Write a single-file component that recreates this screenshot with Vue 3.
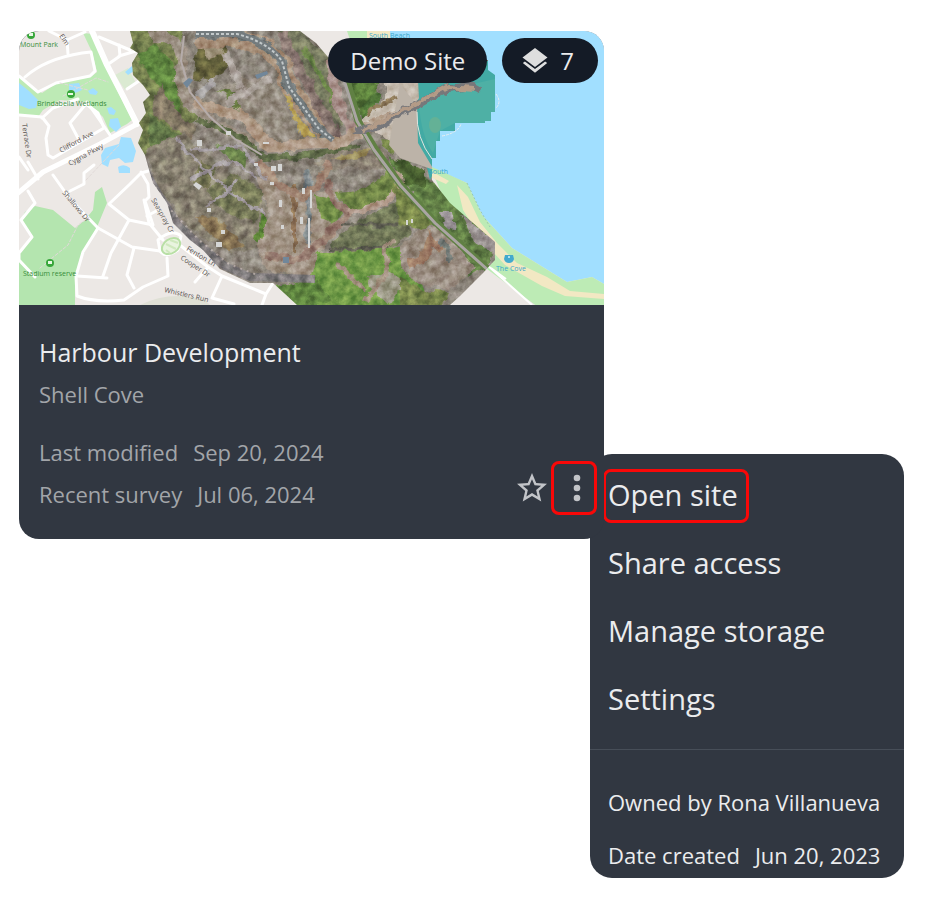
<template>
  <main class="page">
    <article class="site-card">
      <div class="map-box">
        <svg class="map" viewBox="19 31 585 274" preserveAspectRatio="xMidYMid slice" role="img" aria-label="Site map">
          <defs>
            <clipPath id="survey-area">
              <path
                d="M130 31L133 43L130 48L138 53L132 63L133 75L143 85L150 95L143 102L146 113L139 123L143 130L138 143L145 155L149 170L153 183L167 203L173 223L190 240L203 250L220 269L250 283L273 283L284 293L297 305H450L460 296L483 273L495 260V242L450 203L432 180V158H436V141H440V131H455V123H485V121H491V112H495V75L488 70V60H345L328 57L316 43L300 31Z"
              />
            </clipPath>
            <filter id="rough" x="-5%" y="-5%" width="110%" height="110%">
              <feTurbulence type="fractalNoise" baseFrequency="0.09" numOctaves="3" seed="4" result="n" />
              <feDisplacementMap in="SourceGraphic" in2="n" scale="9" xChannelSelector="R" yChannelSelector="G" />
            </filter>
            <filter id="grain" x="0" y="0" width="100%" height="100%" color-interpolation-filters="sRGB">
              <feTurbulence type="fractalNoise" baseFrequency="0.12" numOctaves="5" seed="9" />
              <feColorMatrix values="1.6 .5 0 0 -.55  1.5 .6 0 0 -.55  1.5 .5 .1 0 -.55  0 0 0 0 1" />
            </filter>
          </defs>

          <rect x="19" y="31" width="585" height="274" fill="#ece8e5" />

          <!-- parks -->
          <g fill="#bdeab5">
            <path
              d="M83 33L93 34L107 70L132 120L127 124L110 133L103 117L87 102L60 100L43 110L38 117L19 115V77L42 93L57 83L92 76L97 72L92 52Z"
            />
            <path d="M347 31H370V40H350Z" />
            <path d="M115 75L128 68L136 83L125 90Z" fill="#dbead2" />
          </g>
          <path
            d="M19 253L32 237L21 220L25 212L35 206L53 210L75 228L85 220L93 210L95 192L102 187L107 203L97 227L82 257L75 277V305H19Z"
            fill="#b4e5af"
          />
          <path d="M140 305Q170 290 205 300L210 305Z" fill="#dfe0d5" />

          <!-- water -->
          <g fill="#a1dfff">
            <path d="M388 31H604V284L592 277L567 282L512 248L482 215L467 183L432 168L420 120Z" />
            <path d="M19 83L29 91L38 100L36 108L29 109L19 105Z" />
            <path d="M69 84L79 83L82 90L73 94L69 91Z" />
            <path d="M88 91L93 88L98 92L96 95L90 94Z" />
            <path d="M107 108L111 107L116 111L114 115L109 114Z" />
            <path d="M110 119L118 118L121 127L116 132L109 126Z" />
            <path d="M125 72L132 66L134 71L128 75Z" />
            <path d="M101 155L105 148L119 144L121 137L131 138L136 151L133 162L125 163L119 158L110 160L108 167L102 164Z" />
            <path d="M118 167Q124 163 130 168V173H119Z" />
          </g>

          <!-- coast -->
          <path
            d="M430 166L467 183L482 215L512 248L567 282L592 277L604 284V305H535L483 266L440 190Z"
            fill="#bdebb5"
          />
          <path
            d="M457 185L468 197L480 222L497 243L517 263L547 277L570 291L604 294V299L565 296L542 286L505 265L482 240L463 210Z"
            fill="#f2e8c3"
          />
          <path d="M429 170L449 181L446 184L428 176Z" fill="#f2e8c3" />
          <path d="M367 31H390V40H367Z" fill="#f2e8c3" />
          <path d="M483 268L535 305H450Z" fill="#ece8e5" />
          <path d="M487 265L532 305M491 268L506 279" fill="none" stroke="#fff" stroke-width="2" />
          <path d="M467 183L480 210L490 227" fill="none" stroke="#98c9b0" stroke-width="1" stroke-dasharray="2 2" />
          <path d="M496 94Q502 102 496 108M442 136Q458 133 461 124" fill="none" stroke="#e8eef0" stroke-dasharray="3 1" />

          <!-- roads -->
          <g fill="none" stroke="#fff" stroke-linejoin="round" stroke-linecap="round">
            <path d="M92 31L107 65L124 98L137 124" stroke-width="6" />
            <path d="M137 124L100 144L43 172L17 194" stroke-width="5" />
            <g stroke-width="3">
              <path d="M19 76L38 92L56 83L90 76L95 71L91 52L82 53Q45 59 25 77M85 32L67 40L49 31M67 40L68 54" />
              <path d="M99 37L130 50M119 45L120 56L107 65M136 51L119 56M127 89L145 77" />
              <path d="M19 115L42 117L49 126L46 138L48 155L53 158L104 128L98 113L86 104L70 123L78 138" />
              <path d="M42 118L53 108L78 99M87 102L110 135" />
              <path d="M19 157L28 170M28 162L38 179M53 175L70 199L98 228L132 247L160 251" />
              <path d="M28 191L35 203L21 220L32 237L19 253L19 260L35 277" />
              <path d="M94 165L84 173V184L70 191" />
              <path d="M152 170L141 173L130 184L109 204L129 220L153 225L145 201L149 197L148 184L141 172" />
              <path d="M98 228L83 252L76 276L77 296Q95 303 124 300L143 287L168 276L167 258" />
              <path d="M129 220L111 253L103 276M77 276L107 278M134 248L127 275L134 288" />
              <path d="M144 200L149 223L163 240M147 216L158 210M158 240Q172 228 181 236L178 250Q165 259 160 251Z" />
              <path d="M181 246L208 267L195 282M208 267L222 276L212 298L234 304M222 276L266 294L273 283M266 294L262 305" />
            </g>
            <path d="M60 83L88 90M63 96L96 78L108 82M40 268L68 245L78 225L91 216M86 180L119 145" stroke="#e0d9d8" stroke-width="1" stroke-dasharray="3 2" />
          </g>
          <ellipse cx="171" cy="246" rx="10" ry="7" transform="rotate(-35 171 246)" fill="#e9f4df" stroke="#b8dfa5" stroke-width="2" />
          <path d="M166 244L176 249M170 240L178 243M166 250L170 253" stroke="#cfe8bd" stroke-width="2" />

          <!-- aerial survey -->
          <g clip-path="url(#survey-area)">
            <rect x="120" y="25" width="390" height="285" fill="#8d867c" />
            <g filter="url(#rough)">
              <path d="M118 20H185L177 60L198 112L190 132L142 158L115 110Z" fill="#748050" />
              <path d="M137 55L158 43L175 70L182 115L165 100Z" fill="#5f853f" />
              <path d="M147 110L170 128L185 140L150 150Z" fill="#64784a" />
              <path d="M160 85L183 120L196 125L190 140L150 110Z" fill="#817664" />
              <path d="M150 38Q172 28 182 56L180 80L190 105L215 125L255 142" fill="none" stroke="#9b8f82" stroke-width="11" />
              <path d="M196 45L222 41L232 60L210 82L194 78Z" fill="#66643e" />
              <path d="M202 44L218 40L224 54L207 60Z" fill="#9c9078" />
              <path d="M220 90L240 78L270 78L288 110L300 140L255 142L240 112L218 108Z" fill="#958c80" />
              <path d="M216 90L228 96L226 105L240 110L236 92Z" fill="#687a43" />
              <path d="M225 53L242 88M270 78L226 104" stroke="#aaa19a" stroke-width="8" />
              <path d="M196 97L216 80" stroke="#a4a1a0" stroke-width="7" />
              <path d="M195 40L237 38Q270 46 282 64L292 92L316 121L334 140" fill="none" stroke="#a68e78" stroke-width="18" />
              <path d="M194 35L237 34Q267 42 280 60L288 86L306 111L318 129L332 136" fill="none" stroke="#6f7777" stroke-width="8" />
              <path d="M284 94L290 98L298 116L316 137L301 138L298 125Z" fill="#b39c52" />
              <path d="M278 30L300 30L334 62L342 128L330 132L315 95Z" fill="#777a60" />
              <path d="M282 33L307 83L335 135L347 145" fill="none" stroke="#88766f" stroke-width="10" />
              <path d="M304 48L320 75L335 105" fill="none" stroke="#718b4d" stroke-width="5" />
              <path d="M331 60L337 100L352 132" fill="none" stroke="#a68e88" stroke-width="11" />
              <path d="M345 75L390 72L375 90L378 108L361 120Z" fill="#5d813e" />
              <path d="M385 73H420L433 165L410 152L385 140L360 120L385 98Z" fill="#c5bbae" />
              <path d="M367 116Q380 101 397 98" fill="none" stroke="#8d7958" stroke-width="4" />
              <path d="M363 115L382 98L377 94L362 105Z" fill="#53793a" />
              <path d="M380 140Q395 140 400 150L390 154Z" fill="#74864a" />
              <path d="M194 103L245 117L270 148L306 144L340 143L362 130L400 113" fill="none" stroke="#b09a86" stroke-width="11" />
              <path d="M196 119L240 137L265 158L306 156L360 147" fill="none" stroke="#606c4a" stroke-width="6" />
              <path d="M310 163L340 151L378 145L399 165L383 170L330 167Z" fill="#887e71" />
              <path d="M330 161L366 156L372 149L355 151Z" fill="#9e9160" />
              <path d="M215 144L248 153L246 168L230 160Z" fill="#6a824c" />
              <path d="M145 150L185 132L195 145L220 165L255 185L268 210L262 248L232 254L190 228L155 185Z" fill="#87806f" />
              <path d="M199 158L216 169L207 189L195 182Z" fill="#706f50" />
              <path d="M206 190L234 173L263 192L255 223L225 211Z" fill="#777a59" />
              <path d="M260 213L270 226L260 244L255 240Z" fill="#5d8538" />
              <path d="M196 219L216 217L245 246L228 251Z" fill="#897455" />
              <path d="M175 138L205 170L231 192L264 214M190 180L230 160L260 180M205 209L237 181M192 150L242 146L283 203" fill="none" stroke="#a39ca0" stroke-width="3" />
              <path d="M256 175L295 192L340 190L315 280L265 270L257 247L270 215Z" fill="#a09283" />
              <path d="M294 184V252" stroke="#8e7357" stroke-width="4" />
              <path d="M308 170V245" stroke="#7b8588" stroke-width="5" />
              <path d="M258 160L275 182L301 197L318 185L329 162" fill="none" stroke="#a08472" stroke-width="8" />
              <path d="M316 195L345 205L333 226L320 216Z" fill="#6f8c47" />
              <path d="M336 193L360 191L390 170L399 193L380 205L350 210Z" fill="#6f8546" />
              <path d="M325 180L333 200L349 213L325 238L300 260L265 255" fill="none" stroke="#977c70" stroke-width="8" />
              <path d="M349 213L385 203L408 180L396 172" fill="none" stroke="#b29b8c" stroke-width="6" />
              <path d="M330 242L363 218L395 203L412 233L388 251L335 252Z" fill="#717858" />
              <path d="M340 225L400 225M330 249L390 248" stroke="#615f52" stroke-width="3" />
              <path d="M318 252L384 250L415 245L430 310H290L275 285L310 280Z" fill="#6f9a47" />
              <path d="M276 286L314 277L330 300L300 310Z" fill="#5e853f" />
              <path d="M367 275L389 273L405 282L390 304L372 288Z" fill="#9b9885" />
              <path d="M338 264L365 292M365 302L387 272L384 250L394 238" fill="none" stroke="#9e8b7a" stroke-width="5" />
              <path d="M388 155L405 165L438 185L472 216L495 241L490 263L468 278L430 220Z" fill="#607d45" />
              <path d="M395 158L425 170L425 188L404 183Z" fill="#4b6333" />
              <path d="M393 183L437 222L420 230L398 223Z" fill="#778548" />
              <path d="M400 248L420 230L440 226L475 268L450 290L415 283L400 265Z" fill="#998c80" />
              <path d="M408 264L424 259L430 239L440 250" fill="none" stroke="#9b7963" stroke-width="8" />
              <path d="M438 240L446 247L452 262" fill="none" stroke="#747b78" stroke-width="5" />
              <path d="M438 212L452 212L456 230L448 228Z" fill="#9e979a" />
              <path d="M462 213L497 242V256L475 243Z" fill="#98908f" />
              <path d="M400 275L420 290L450 292L440 310H400Z" fill="#78864c" />
            </g>
            <path d="M138 151L149 178L162 200L178 225L203 248L225 266L250 277L315 279" fill="none" stroke="#7d797a" stroke-width="8" />
            <path d="M142 155L153 183L169 208L199 240L229 264L260 276" fill="none" stroke="#b4aaa6" stroke-width="2" stroke-dasharray="2 5" />
            <rect class="grain" x="120" y="25" width="390" height="285" filter="url(#grain)" />
            <path d="M347 80L358 121L376 150L400 184L435 222L490 271" fill="none" stroke="#608043" stroke-width="7" />
            <path d="M344 80L357 121L374 150L400 185L435 223L488 270" fill="none" stroke="#aaa5a3" stroke-width="3" />
            <path d="M417 61H498V130H455L430 180Q425 156 417 145Q409 112 419 98Z" fill="#42aaa4" />
            <path d="M419 104L455 88L495 79V123H455L440 131L433 153Q421 136 419 104Z" fill="#4eb0a5" />
            <path d="M400 84L417 105L418 143L434 170L400 158L389 145Z" fill="#bcb3a8" />
            <path d="M417 112Q416 138 432 159" fill="none" stroke="#e0e4df" stroke-width="1" />
            <ellipse cx="435" cy="125" rx="6" ry="8" fill="#64b196" />
            <g filter="url(#rough)">
              <path d="M358 131L380 125L402 113L429 98L448 88L470 85L478 89" fill="none" stroke="#77777a" stroke-width="8" stroke-linecap="round" />
              <path d="M360 131L402 112L428 97L447 87L475 89" fill="none" stroke="#b39b87" stroke-width="4" />
            </g>
            <path d="M196 34L237 34Q268 42 282 61L289 87L306 111L319 129L333 140" fill="none" stroke="#737b7e" stroke-width="6" />
            <path d="M196 34L237 34Q268 42 282 61L289 87L306 111L319 129L333 140" fill="none" stroke="#c3c9ca" stroke-width="2" stroke-dasharray="3 2" />
            <path d="M184 36L181 61L190 92L210 117L235 139L262 155" fill="none" stroke="#b5acaa" stroke-width="2" />
            <g fill="#d5d6d5">
              <path d="M226 131h5v4h-5zM197 140h5v6h-5zM271 166h5v5h-5zM279 200h3v7h-3zM281 225h3v4h-3zM300 217h3v7h-3zM270 182h4v3h-4z" />
              <path d="M216 242h6v5h-6zM221 230h4v4h-4zM207 208h4v4h-4zM308 218h2v30h-2zM302 188h3v6h-3zM406 220h2v5h-2zM411 219h2v4h-2zM254 163h4v3h-4z" />
              <path d="M196 182l6 4l-3 4l-6-5zM310 190h2v18h-2zM278 164h4v7h-4zM263 142h6v2h-6z" />
            </g>
            <path d="M183 83l6-5l4 2l-6 8zM255 75l12-4l1 3l-11 5zM283 257h6v6h-6z" fill="#71879a" />
          </g>

          <!-- place labels -->
          <g class="labels park">
            <text x="20" y="47">Mount Park</text>
            <text x="37" y="106">Brindabella Wetlands</text>
            <text x="23" y="276">Stadium reserve</text>
          </g>
          <g class="labels street">
            <text transform="translate(61 153) rotate(-29)">Clifford Ave</text>
            <text transform="translate(70 166) rotate(-29)">Cygna Pkwy</text>
            <text transform="translate(62 193) rotate(50)">Shallows Dr</text>
            <text transform="translate(151 200) rotate(60)">Seaspray Cr</text>
            <text transform="translate(186 250) rotate(31)">Fenton Ln</text>
            <text transform="translate(180 259) rotate(33)">Cooper Dr</text>
            <text transform="translate(164 292) rotate(13)">Whistlers Run</text>
            <text transform="translate(22 124) rotate(82)">Terrace Dr</text>
            <text transform="translate(59 36) rotate(55)">Elm</text>
          </g>
          <g class="labels beach">
            <text x="369" y="38">South Beach</text>
            <text x="429" y="174">South</text>
            <text x="496" y="271">The Cove</text>
          </g>
          <g fill="#37a63a">
            <circle cx="31" cy="35" r="4" />
            <circle cx="71" cy="94" r="4" />
            <circle cx="50" cy="263" r="4" />
          </g>
          <path d="M29 33h4v3h-4zM68 93h5v2h-5zM48 261h4v3h-4z" fill="#e8f8e4" />
          <path d="M505 255h8l1 4q-1 4-5 4t-5-4z" fill="#43a9cd" />
          <circle cx="509" cy="257" r="1" fill="#d5f1f8" />
        </svg>

        <div class="badges">
          <span class="badge">Demo Site</span>
          <span class="badge layers">
            <svg width="26" height="28" viewBox="0 0 26 28" aria-hidden="true">
              <path d="M13 1L25.500 10.500L13 20L.5 10.500Z" fill="#dedede" />
              <path d="M.8 16L2.900 14.400L13 22L23.100 14.400L25.200 16L13 25.800Z" fill="#dedede" />
            </svg>
            7
          </span>
        </div>
      </div>

      <div class="card-body">
        <div class="details">
          <h1 class="title">Harbour Development</h1>
          <p class="muted">Shell Cove</p>
          <dl class="dates">
            <div v-for="row in dates" :key="row.label" class="pair muted">
              <dt>{{ row.label }}</dt>
              <dd>{{ row.value }}</dd>
            </div>
          </dl>
        </div>
        <div class="actions">
          <button class="icon-btn" type="button" aria-label="Favourite" :aria-pressed="starred" @click="starred = !starred">
            <svg width="36" height="36" viewBox="0 0 24 24" aria-hidden="true">
              <path
                :fill="starred ? '#c9cacd' : 'none'"
                d="M12 17.270L18.180 21L16.540 13.970L22 9.240L14.810 8.630L12 2L9.190 8.630L2 9.240L7.450 13.970L5.820 21Z"
              />
              <path
                fill="#c2c4c8"
                d="M12 15.390L8.240 17.660L9.230 13.380L5.910 10.500L10.290 10.130L12 6.090L13.710 10.130L18.090 10.500L14.770 13.380L15.760 17.660M22 9.240L14.810 8.630L12 2L9.190 8.630L2 9.240L7.450 13.970L5.820 21L12 17.270L18.180 21L16.540 13.970L22 9.240Z"
              />
            </svg>
          </button>
          <button
            class="icon-btn more marked"
            type="button"
            aria-label="More options"
            :aria-expanded="menuOpen"
            @click="menuOpen = !menuOpen"
          >
            <svg width="8" height="28" viewBox="0 0 8 28" fill="#c2c4c8" aria-hidden="true">
              <circle cx="4" cy="4" r="3.300" />
              <circle cx="4" cy="14" r="3.300" />
              <circle cx="4" cy="24" r="3.300" />
            </svg>
          </button>
        </div>
      </div>
    </article>

    <aside v-show="menuOpen" class="menu">
      <div class="menu-items">
        <button
          v-for="(item, i) in items"
          :key="item"
          type="button"
          class="menu-item"
          :class="{ marked: i === 0 }"
        >
          {{ item }}
        </button>
      </div>
      <div class="menu-info">
        <p>Owned by Rona Villanueva</p>
        <p class="pair"><span>Date created</span><span>Jun 20, 2023</span></p>
      </div>
    </aside>
  </main>
</template>

<script setup>
import { ref } from 'vue'

const starred = ref(false)
const menuOpen = ref(true)

const dates = [
  { label: 'Last modified', value: 'Sep 20, 2024' },
  { label: 'Recent survey', value: 'Jul 06, 2024' },
]

const items = ['Open site', 'Share access', 'Manage storage', 'Settings']
</script>

<style>
body {
  margin: 0;
  background: #fff;
}
</style>

<style scoped>
.page {
  display: grid;
  grid-template-columns: minmax(0, 1fr) 314px;
  padding: 31px 43px 34px 19px;
  font-family: 'Open Sans', 'Noto Sans', sans-serif;
  font-weight: 400;
  color: #ebecee;
}

h1,
p,
dl,
dd {
  margin: 0;
}

button {
  font: inherit;
  color: inherit;
  background: none;
  cursor: pointer;
}

.site-card {
  grid-column: 1;
  position: relative;
  z-index: 1;
  margin-right: -14px;
  border-radius: 20px;
  overflow: hidden;
  background: #313741;
}

.map-box {
  position: relative;
}

.map {
  display: block;
  width: 100%;
}

.grain {
  mix-blend-mode: overlay;
  opacity: 0.3;
}

.labels {
  font-size: 7px;
  font-weight: 500;
}

.park {
  fill: #378d3a;
}

.street {
  fill: #55504e;
}

.beach {
  fill: #3aa8cc;
}

.badges {
  position: absolute;
  top: 7px;
  right: 6px;
  display: flex;
  gap: 15px;
}

.badge {
  display: flex;
  align-items: center;
  height: 45px;
  padding: 0 22px;
  border-radius: 23px;
  background: #141b26;
  font-size: 24px;
  line-height: 42px;
}

.layers {
  gap: 12px;
  padding: 0 24px 0 20px;
}

.card-body {
  display: flex;
  justify-content: space-between;
  align-items: flex-end;
  padding: 26px 7px 24px 20px;
}

.title {
  font-size: 25px;
  line-height: 42px;
  font-weight: inherit;
}

.muted {
  font-size: 22px;
  line-height: 42px;
  color: #a2a5a9;
}

.dates {
  margin-top: 16px;
}

.pair {
  display: flex;
  gap: 15px;
}

.actions {
  display: flex;
  align-items: center;
  gap: 1px;
}

.icon-btn {
  display: flex;
  align-items: center;
  justify-content: center;
  padding: 0;
  border: 0;
}

.more {
  width: 46px;
  height: 54px;
  padding-left: 5px;
}

.marked.more,
.marked.menu-item {
  border: 3px solid #f90808;
  border-radius: 8px;
}

.menu {
  grid-column: 2;
  grid-row: 2;
  margin-top: -85px;
  border-radius: 22px;
  background: #313741;
}

.menu-items {
  display: flex;
  flex-direction: column;
  align-items: flex-start;
  gap: 14px;
  padding: 15px 13px 22px;
}

.menu-item {
  height: 54px;
  padding: 0 8px 4px 2px;
  border: 3px solid transparent;
  font-size: 29px;
}

.menu-info {
  display: flex;
  flex-direction: column;
  gap: 23px;
  padding: 37px 18px 8px;
  border-top: 1px solid #474e58;
  font-size: 22px;
  line-height: 30px;
  white-space: nowrap;
}
</style>
